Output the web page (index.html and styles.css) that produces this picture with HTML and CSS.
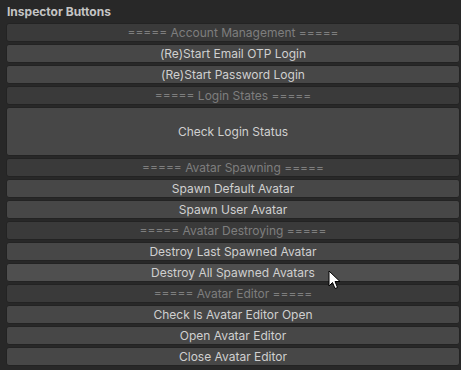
FILE: index.html
```html
<!DOCTYPE html>
<html lang="en">
<head>
    <meta charset="UTF-8">
    <title>Inspector Buttons</title>
    <link rel="stylesheet" href="styles.css">
</head>
<body>
    <div class="inspector">
        <div class="inspector-title">Inspector Buttons</div>
        <div class="button-list">
            <button class="btn btn-label" disabled>===== Account Management =====</button>
            <button class="btn">(Re)Start Email OTP Login</button>
            <button class="btn">(Re)Start Password Login</button>
            <button class="btn btn-label" disabled>===== Login States =====</button>
            <button class="btn btn-tall">Check Login Status</button>
            <button class="btn btn-label" disabled>===== Avatar Spawning =====</button>
            <button class="btn">Spawn Default Avatar</button>
            <button class="btn">Spawn User Avatar</button>
            <button class="btn btn-label" disabled>===== Avatar Destroying =====</button>
            <button class="btn">Destroy Last Spawned Avatar</button>
            <button class="btn btn-hover">Destroy All Spawned Avatars</button>
            <button class="btn btn-label" disabled>===== Avatar Editor =====</button>
            <button class="btn">Check Is Avatar Editor Open</button>
            <button class="btn">Open Avatar Editor</button>
            <button class="btn">Close Avatar Editor</button>
        </div>
        <!-- mouse cursor -->
        <svg class="cursor" width="14" height="20" viewBox="0 0 14 20">
            <path d="M1 1 L1 16 L4.5 12.5 L7 18.5 L9.5 17.5 L7 11.5 L12 11.5 Z" fill="#fff" stroke="#000" stroke-width="1" stroke-linejoin="round"/>
        </svg>
    </div>
</body>
</html>
```

FILE: styles.css
```css
body {
    margin: 0;
    background-color: #282828;
    font-family: Inter, "Noto Sans", sans-serif;
    font-size: 12px;
}

.inspector {
    position: relative;
    padding: 0 1px 0 6px;
}

.inspector-title {
    height: 23px;
    line-height: 23px;
    padding-left: 1px;
    font-weight: bold;
    color: #c4c4c4;
}

.button-list {
    display: flex;
    flex-direction: column;
    gap: 2px;
}

.btn {
    height: 19px;
    padding: 0;
    border: 1px solid #232323;
    border-radius: 3px;
    background-color: #474747;
    color: #d0d0d0;
    font-family: inherit;
    font-size: 12px;
    text-align: center;
}

.btn-label {
    background-color: #3a3a3a;
    color: #7e7e7e;
}

.btn-tall {
    height: 49px;
}

.btn-hover {
    background-color: #4f4f4f;
}

.cursor {
    position: absolute;
    left: 328px;
    top: 270px;
}
```
